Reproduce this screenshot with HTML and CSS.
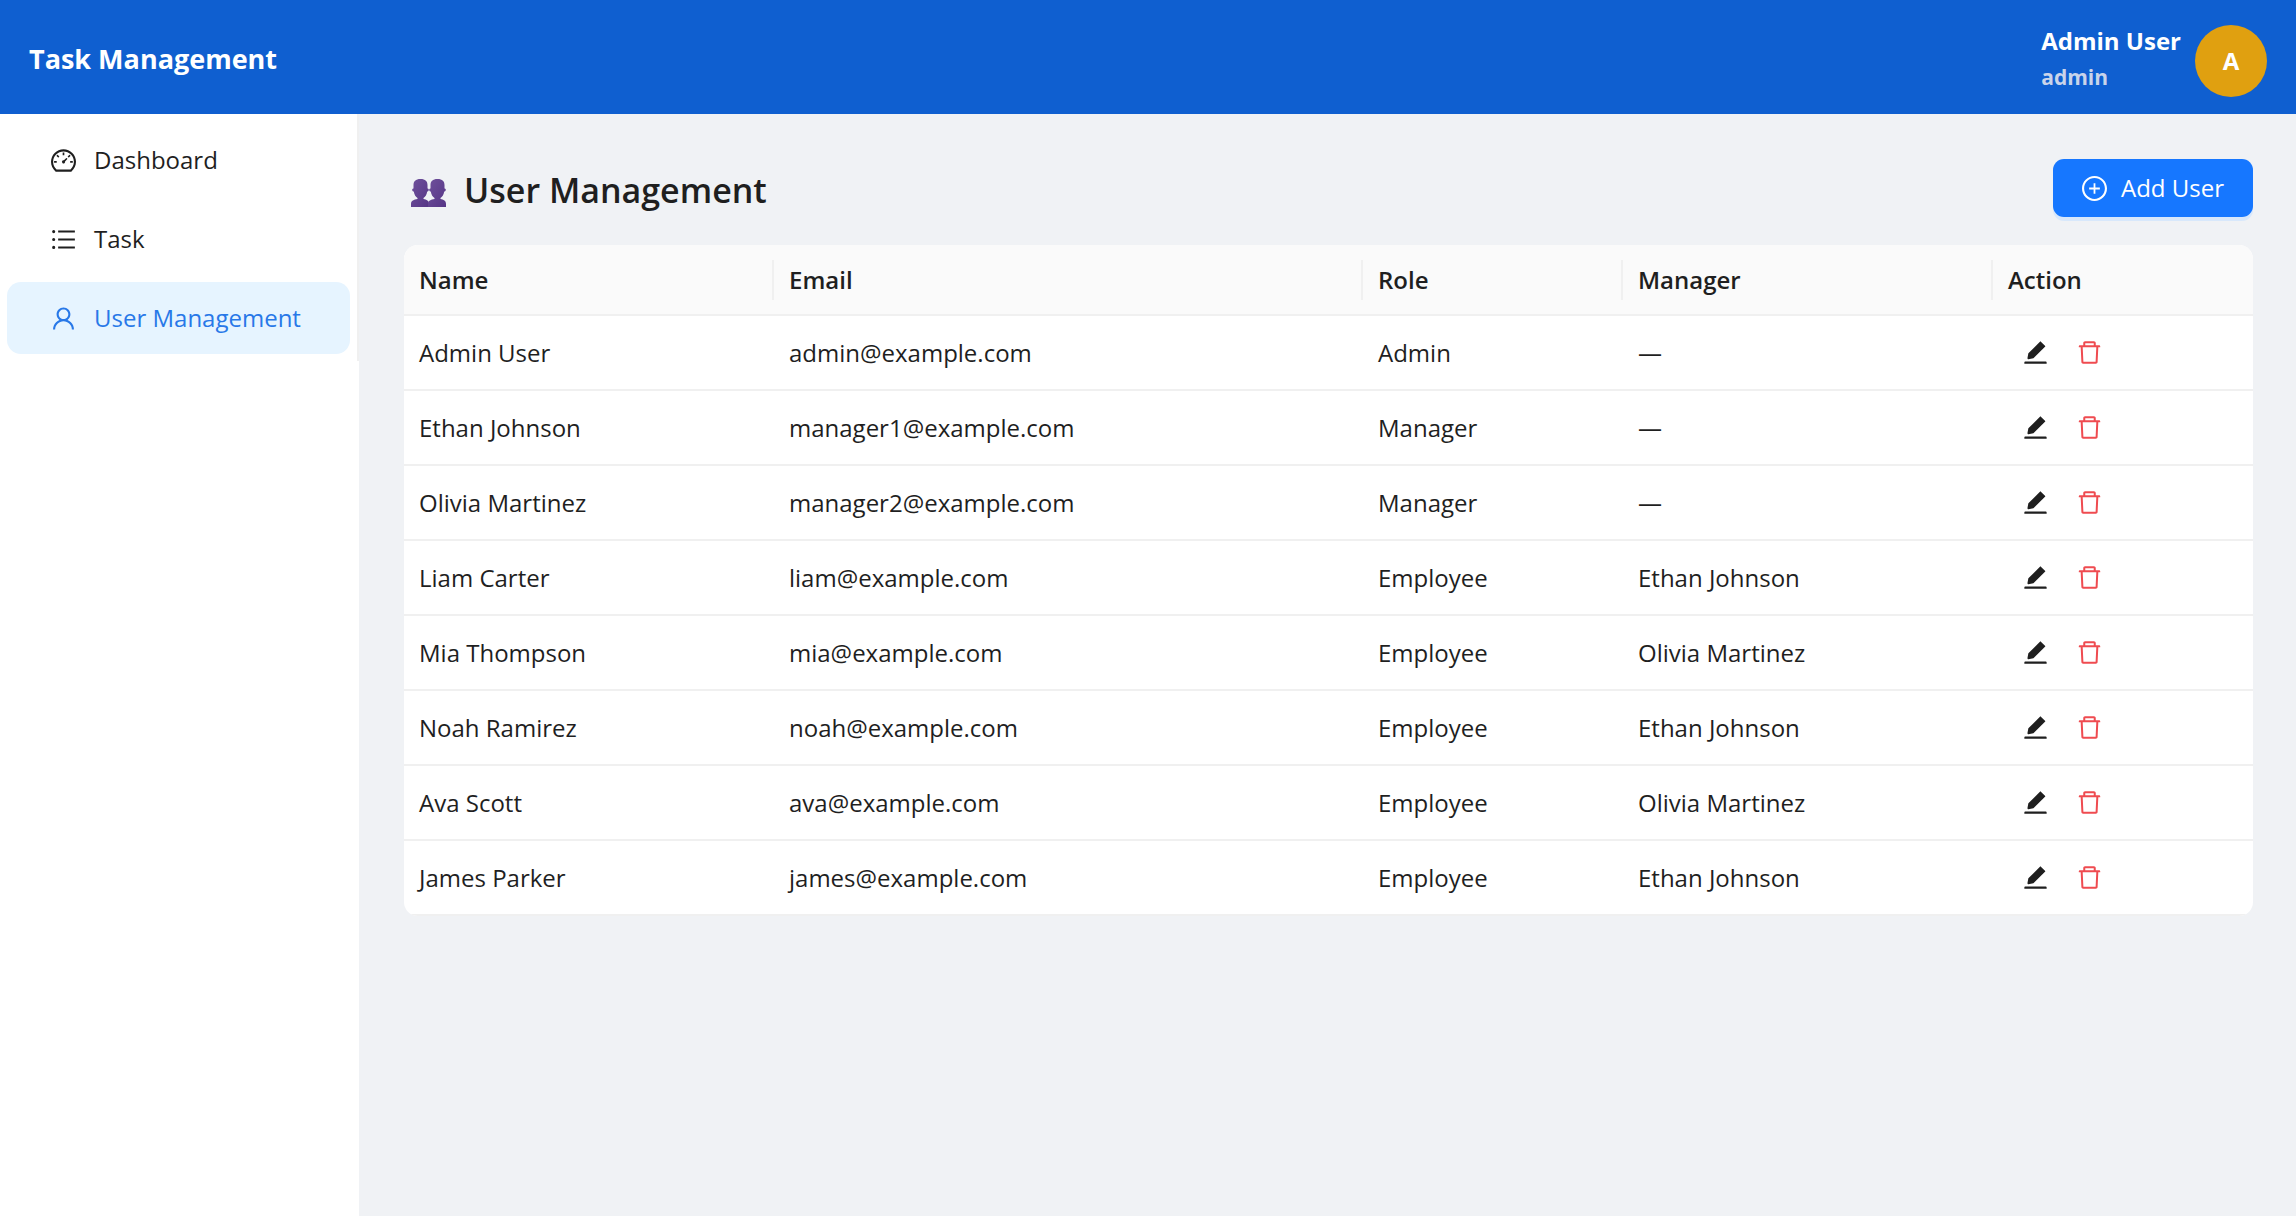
FILE: index.html
```html
<!DOCTYPE html>
<html lang="en">
<head>
<meta charset="utf-8">
<meta name="viewport" content="width=device-width, initial-scale=1">
<title>Task Management</title>
<link rel="stylesheet" href="styles.css">
</head>
<body>
<svg class="sprite" aria-hidden="true">
  <symbol id="icon-dashboard" viewBox="64 64 896 896"><path d="M924.8 385.6a446.7 446.7 0 00-96-142.4 446.7 446.7 0 00-142.4-96C631.1 123.8 572.5 112 512 112s-119.1 11.8-174.4 35.2a446.7 446.7 0 00-142.4 96 446.7 446.7 0 00-96 142.4C75.8 440.9 64 499.5 64 560c0 132.7 58.3 257.7 159.9 343.1l1.7 1.4c5.8 4.8 13.1 7.5 20.6 7.5h531.7c7.5 0 14.8-2.7 20.6-7.5l1.7-1.4C901.7 817.7 960 692.7 960 560c0-60.5-11.9-119.1-35.2-174.4zM761.4 836H262.6A371.12 371.12 0 01140 560c0-99.4 38.7-192.8 109-263 70.3-70.3 163.7-109 263-109 99.4 0 192.8 38.7 263 109 70.3 70.3 109 163.7 109 263 0 105.6-44.5 205.5-122.6 276zM623.5 421.5a8.03 8.03 0 00-11.3 0L527.7 506c-18.7-5-39.4-.2-54.1 14.5a55.95 55.95 0 000 79.2 55.95 55.95 0 0079.2 0 55.87 55.87 0 0014.5-54.1l84.5-84.5c3.1-3.1 3.1-8.2 0-11.3l-28.3-28.3zM490 320h44c4.4 0 8-3.6 8-8v-80c0-4.4-3.6-8-8-8h-44c-4.4 0-8 3.6-8 8v80c0 4.4 3.6 8 8 8zm260 218v44c0 4.4 3.6 8 8 8h80c4.4 0 8-3.6 8-8v-44c0-4.4-3.6-8-8-8h-80c-4.4 0-8 3.6-8 8zm12.700-197.200l-31.100-31.100a8.030 8.030 0 00-11.300 0l-56.600 56.600a8.030 8.030 0 000 11.300l31.100 31.100c3.100 3.100 8.200 3.100 11.300 0l56.600-56.600c3.100-3.100 3.100-8.200 0-11.300zm-458.600-31.100a8.030 8.030 0 00-11.300 0l-31.100 31.100a8.030 8.030 0 000 11.300l56.600 56.600c3.100 3.100 8.200 3.100 11.300 0l31.100-31.100c3.100-3.100 3.100-8.200 0-11.300l-56.600-56.600zM262 530h-80c-4.400 0-8 3.600-8 8v44c0 4.400 3.600 8 8 8h80c4.400 0 8-3.600 8-8v-44c0-4.400-3.600-8-8-8z"/></symbol>
  <symbol id="icon-list" viewBox="64 64 896 896"><path d="M912 192H328c-4.400 0-8 3.600-8 8v56c0 4.400 3.600 8 8 8h584c4.400 0 8-3.600 8-8v-56c0-4.400-3.600-8-8-8zm0 284H328c-4.400 0-8 3.600-8 8v56c0 4.400 3.600 8 8 8h584c4.400 0 8-3.600 8-8v-56c0-4.400-3.600-8-8-8zm0 284H328c-4.400 0-8 3.600-8 8v56c0 4.400 3.600 8 8 8h584c4.400 0 8-3.600 8-8v-56c0-4.400-3.600-8-8-8zM104 228a56 56 0 10112 0 56 56 0 10-112 0zm0 284a56 56 0 10112 0 56 56 0 10-112 0zm0 284a56 56 0 10112 0 56 56 0 10-112 0z"/></symbol>
  <symbol id="icon-user" viewBox="64 64 896 896"><path d="M858.500 763.600a374 374 0 00-80.600-119.500 375.630 375.630 0 00-119.500-80.600c-.4-.2-.8-.3-1.200-.5C719.500 518 760 444.700 760 362c0-137-111-248-248-248S264 225 264 362c0 82.700 40.500 156 102.800 201.100-.4.200-.8.300-1.200.5-44.800 18.900-85 46-119.500 80.600a375.630 375.630 0 00-80.600 119.500A371.700 371.700 0 00136 901.800a8 8 0 008 8.200h60c4.400 0 7.900-3.500 8-7.800 2-77.200 33-149.500 87.800-204.300 56.700-56.700 132-87.900 212.200-87.900s155.500 31.200 212.200 87.900C779 752.700 810 825 812 902.200c.1 4.400 3.600 7.800 8 7.800h60a8 8 0 008-8.200c-1-47.800-10.900-94.300-29.500-138.200zM512 534c-45.900 0-89.100-17.900-121.600-50.400S340 407.900 340 362c0-45.900 17.900-89.100 50.400-121.600S466.100 190 512 190s89.100 17.900 121.600 50.400S684 316.100 684 362c0 45.900-17.900 89.100-50.400 121.600S557.900 534 512 534z"/></symbol>
  <symbol id="icon-plus" viewBox="64 64 896 896"><path d="M696 480H544V328c0-4.400-3.600-8-8-8h-48c-4.400 0-8 3.600-8 8v152H328c-4.400 0-8 3.600-8 8v48c0 4.400 3.600 8 8 8h152v152c0 4.400 3.600 8 8 8h48c4.400 0 8-3.600 8-8V544h152c4.400 0 8-3.600 8-8v-48c0-4.400-3.600-8-8-8z"/><path d="M512 64C264.600 64 64 264.600 64 512s200.600 448 448 448 448-200.600 448-448S759.400 64 512 64zm0 820c-205.400 0-372-166.600-372-372s166.600-372 372-372 372 166.600 372 372-166.600 372-372 372z"/></symbol>
  <symbol id="icon-edit" viewBox="64 64 896 896"><path d="M880 836H144c-17.700 0-32 14.300-32 32v36c0 4.400 3.600 8 8 8h784c4.400 0 8-3.600 8-8v-36c0-17.700-14.300-32-32-32zm-622.300-84c2 0 4-.2 6-.5L431.900 722c2-.4 3.900-1.300 5.300-2.800l423.900-423.900a9.960 9.960 0 000-14.100L694.900 114.900c-1.900-1.900-4.400-2.900-7.100-2.900s-5.200 1-7.100 2.900L256.800 538.800c-1.500 1.500-2.400 3.300-2.800 5.300l-29.500 168.200a33.500 33.500 0 009.400 29.800c6.600 6.400 14.900 9.900 23.800 9.900z"/></symbol>
  <symbol id="icon-delete" viewBox="64 64 896 896"><path d="M360 184h-8c4.400 0 8-3.600 8-8v8h304v-8c0 4.400 3.600 8 8 8h-8v72h72v-80c0-35.300-28.700-64-64-64H352c-35.300 0-64 28.700-64 64v80h72v-72zm504 72H160c-17.700 0-32 14.300-32 32v32c0 4.400 3.600 8 8 8h60.400l24.700 523c1.600 34.100 29.800 61 63.900 61h454c34.200 0 62.300-26.800 63.900-61l24.700-523H888c4.400 0 8-3.600 8-8v-32c0-17.700-14.300-32-32-32zM731.300 840H292.700l-24.200-512h487l-24.200 512z"/></symbol>
</svg>

<header class="topbar">
  <div class="brand">Task Management</div>
  <div class="account">
    <div class="account-text">
      <span class="account-name">Admin User</span>
      <span class="account-role">admin</span>
    </div>
    <span class="avatar">A</span>
  </div>
</header>

<div class="layout">
  <aside class="sidebar">
    <nav class="menu">
      <a class="menu-item" href="#dashboard"><svg class="icon"><use href="#icon-dashboard"/></svg>Dashboard</a>
      <a class="menu-item" href="#task"><svg class="icon"><use href="#icon-list"/></svg>Task</a>
      <a class="menu-item selected" href="#users" aria-current="page"><svg class="icon"><use href="#icon-user"/></svg>User Management</a>
    </nav>
  </aside>

  <main class="content">
    <div class="page-head">
      <h1 class="page-title">
        <svg class="people" viewBox="0 0 36 30" aria-hidden="true">
          <defs>
            <linearGradient id="people-fill" x1="0" y1="0" x2="1" y2="1">
              <stop offset="0" stop-color="#6f519b"/>
              <stop offset="1" stop-color="#563586"/>
            </linearGradient>
            <g id="person">
              <path d="M9.500 0C4.500 0 2.500 2.500 2.500 6v3.500c-1.800-.3-1.800 3 .3 3C3.200 16 5 18 6.500 19v1C3 20.500 0 21.500 0 25v3h18v-3c0-3.500-2.500-4.500-5.500-5v-1c1.500-1 3.300-3 3.700-6.500 2.100 0 2.100-3.300.3-3V6c0-3.500-2-6-7-6z"/>
            </g>
          </defs>
          <use href="#person" fill="url(#people-fill)"/>
          <use href="#person" x="17" fill="url(#people-fill)"/>
        </svg>
        User Management
      </h1>
      <button class="add-button" type="button"><svg class="icon"><use href="#icon-plus"/></svg>Add User</button>
    </div>

    <table class="users">
      <colgroup>
        <col class="col-name"><col class="col-email"><col class="col-role"><col class="col-manager"><col class="col-action">
      </colgroup>
      <thead>
        <tr><th scope="col">Name</th><th scope="col">Email</th><th scope="col">Role</th><th scope="col">Manager</th><th scope="col">Action</th></tr>
      </thead>
      <tbody id="user-rows"></tbody>
    </table>
  </main>
</div>
<script src="app.js"></script>
</body>
</html>
```

FILE: styles.css
```css
* {
  box-sizing: border-box;
}

body {
  margin: 0;
  min-height: 100vh;
  display: flex;
  flex-direction: column;
  background: #f0f2f5;
  color: #1f1f1f;
  font-family: "Segoe UI", "Open Sans", "Noto Sans", sans-serif;
  font-size: 24px;
  line-height: 40px;
}

.sprite {
  display: none;
}

.icon {
  width: 25px;
  height: 25px;
  flex: none;
  fill: currentColor;
}

.topbar {
  display: flex;
  align-items: center;
  justify-content: space-between;
  height: 114px;
  padding: 7px 29px 0;
  background: #0f5fd0;
  color: #fff;
  font-weight: 700;
}

.brand {
  font-size: 27px;
  padding-bottom: 4px;
}

.account {
  display: flex;
  align-items: center;
  gap: 14px;
}

.account-text {
  display: flex;
  flex-direction: column;
  line-height: 36px;
  padding-bottom: 3px;
}

.account-role {
  font-size: 21px;
  color: #c9d4ea;
}

.avatar {
  display: flex;
  align-items: center;
  justify-content: center;
  width: 72px;
  height: 72px;
  border-radius: 50%;
  background: #e0a010;
}

.layout {
  flex: 1;
  display: flex;
}

.sidebar {
  width: 359px;
  flex: none;
  background: #fff;
}

.menu {
  display: flex;
  flex-direction: column;
  gap: 7px;
  padding: 10px 7px 7px;
  border-right: 2px solid #f0f0f0;
}

.menu-item {
  display: flex;
  align-items: center;
  gap: 18px;
  height: 72px;
  padding: 0 44px;
  border-radius: 14px;
  color: #1f1f1f;
  text-decoration: none;
}

.menu-item.selected {
  background: #e6f4ff;
  color: #2878e8;
}

.content {
  flex: 1;
  min-width: 0;
  padding: 45px 43px 45px 45px;
}

.page-head {
  display: flex;
  align-items: center;
  justify-content: space-between;
  margin-bottom: 28px;
}

.page-title {
  display: flex;
  align-items: center;
  gap: 17px;
  margin: 0;
  padding: 3px 0 0 7px;
  font-size: 34px;
  font-weight: 600;
}

.people {
  width: 36px;
  height: 30px;
  margin-top: 8px;
}

.add-button {
  display: flex;
  align-items: center;
  gap: 14px;
  height: 58px;
  padding: 0 29px;
  border: 0;
  border-radius: 11px;
  background: #1677ff;
  box-shadow: 0 4px 0 #d8e8fb;
  color: #fff;
  font: inherit;
}

.users {
  width: 100%;
  table-layout: fixed;
  border-collapse: separate;
  border-spacing: 0;
  border-radius: 14px;
  overflow: hidden;
  background: #fff;
}

.col-name,
.col-manager {
  width: 370px;
}

.col-role,
.col-action {
  width: 260px;
}

.users th,
.users td {
  padding: 1px 15px 0;
  border-bottom: 2px solid #f0f0f0;
  text-align: left;
}

.users th {
  height: 71px;
  background: linear-gradient(#f0f0f0, #f0f0f0) right center / 2px 40px no-repeat #fafafa;
  font-weight: 600;
}

.users th:last-child {
  background: #fafafa;
}

.users td {
  height: 75px;
}

.actions {
  display: flex;
  align-items: center;
  gap: 29px;
  padding: 0 0 2px 15px;
}

.icon-button {
  display: flex;
  padding: 0;
  border: 0;
  background: none;
  color: #1f1f1f;
}

.icon-button.danger {
  color: #ef4b50;
}
```

FILE: app.js
```js
const users = [
  ["Admin User", "admin@example.com", "Admin", "—"],
  ["Ethan Johnson", "manager1@example.com", "Manager", "—"],
  ["Olivia Martinez", "manager2@example.com", "Manager", "—"],
  ["Liam Carter", "liam@example.com", "Employee", "Ethan Johnson"],
  ["Mia Thompson", "mia@example.com", "Employee", "Olivia Martinez"],
  ["Noah Ramirez", "noah@example.com", "Employee", "Ethan Johnson"],
  ["Ava Scott", "ava@example.com", "Employee", "Olivia Martinez"],
  ["James Parker", "james@example.com", "Employee", "Ethan Johnson"],
];

document.getElementById("user-rows").innerHTML = users
  .map(
    (user) => `<tr>${user.map((value) => `<td>${value}</td>`).join("")}<td><div class="actions">
      <button class="icon-button" type="button" aria-label="Edit ${user[0]}"><svg class="icon"><use href="#icon-edit"/></svg></button>
      <button class="icon-button danger" type="button" aria-label="Delete ${user[0]}"><svg class="icon"><use href="#icon-delete"/></svg></button>
    </div></td></tr>`
  )
  .join("");
```
